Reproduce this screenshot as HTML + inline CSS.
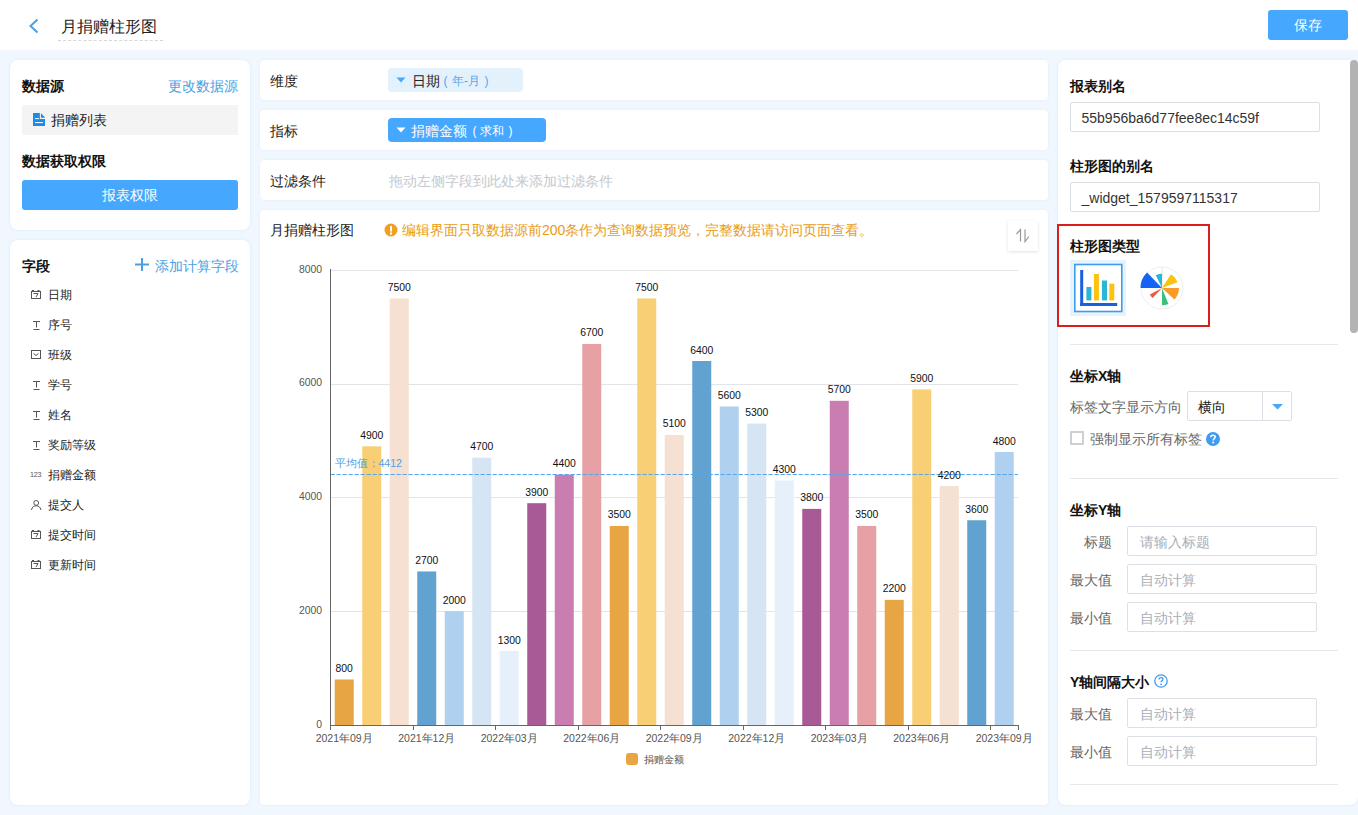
<!DOCTYPE html>
<html><head><meta charset="utf-8">
<style>
*{box-sizing:border-box;margin:0;padding:0}
html,body{width:1358px;height:815px;overflow:hidden;background:#f0f7fe;font-family:"Liberation Sans",sans-serif;position:relative}
.t{position:absolute;white-space:nowrap}
.hdr{position:absolute;left:0;top:0;width:1358px;height:50px;background:#fff}
.pn{position:absolute;background:#fff;border-radius:8px;box-shadow:0 0 3px rgba(120,170,220,0.18)}
.row{position:absolute;background:#fff;border-radius:4px;box-shadow:0 0 2px rgba(120,170,220,0.15)}
.btn{position:absolute;background:#45a8fe;border-radius:3px;color:#fff;text-align:center}
.inp{position:absolute;border:1px solid #dcdfe6;border-radius:2px;background:#fff}
.hr{position:absolute;height:1px;background:#e8e8e8}
.bl{position:absolute;width:40px;text-align:center;font-size:10.4px;line-height:20px;color:#111}
.yl{position:absolute;left:280px;width:42px;text-align:right;font-size:10.4px;line-height:20px;color:#555}
.xl{position:absolute;width:80px;text-align:center;font-size:10.5px;line-height:20px;color:#555}
.fi{position:absolute;left:30px;width:11px;height:12px;display:flex;align-items:center;justify-content:center}
</style></head><body>
<div class="hdr"></div>
<svg style="position:absolute;left:28px;top:18px" width="12" height="16" viewBox="0 0 12 16"><path d="M9.5 1.5 L2.5 8 L9.5 14.5" fill="none" stroke="#4a9fe8" stroke-width="2"/></svg>
<div class="t" style="left:61px;top:16.5px;font-size:16px;line-height:20px;color:#222;">月捐赠柱形图</div>

<div style="position:absolute;left:58px;top:40px;width:105px;border-top:1px dashed #d6d6d6"></div>
<div class="btn" style="left:1268px;top:10px;width:80px;height:30px;line-height:30px;font-size:14px">保存</div>

<!-- left panel 1 -->
<div class="pn" style="left:10px;top:60px;width:240px;height:170px"></div>
<div class="t" style="left:22px;top:75.5px;font-size:14px;line-height:20px;color:#111;font-weight:bold;">数据源</div>

<div class="t" style="left:168px;top:75.5px;font-size:14px;line-height:20px;color:#4a9fe0;">更改数据源</div>

<div style="position:absolute;left:22px;top:105px;width:216px;height:30px;background:#f4f4f4"></div>
<svg style="position:absolute;left:33px;top:113px" width="12" height="13" viewBox="0 0 12 13"><path d="M0 0 H7.8 L12 4.6 V13 H0 Z" fill="#1f8be8"/><path d="M7.4 0 V5.4 H12" fill="none" stroke="#e8f6ff" stroke-width="1.1"/><rect x="2" y="5" width="4" height="1.1" fill="#e8f6ff"/><rect x="2" y="9" width="8" height="1.1" fill="#e8f6ff"/></svg>
<div class="t" style="left:51px;top:110.0px;font-size:14px;line-height:20px;color:#222;">捐赠列表</div>

<div class="t" style="left:22px;top:151.0px;font-size:14px;line-height:20px;color:#111;font-weight:bold;">数据获取权限</div>

<div class="btn" style="left:22px;top:180px;width:216px;height:30px;line-height:30px;font-size:14px">报表权限</div>

<!-- left panel 2 -->
<div class="pn" style="left:10px;top:240px;width:240px;height:565px"></div>
<div class="t" style="left:22px;top:256.0px;font-size:14px;line-height:20px;color:#111;font-weight:bold;">字段</div>

<svg style="position:absolute;left:135px;top:258px" width="14" height="13" viewBox="0 0 14 13"><path d="M0 6.5 H14 M7 0 V13" stroke="#4a9fe0" stroke-width="2"/></svg>
<div class="t" style="left:155px;top:255.5px;font-size:14px;line-height:20px;color:#4a9fe0;">添加计算字段</div>

<svg style="position:absolute;left:31px;top:290px" width="10" height="9" viewBox="0 0 10 9"><path d="M1 0.5 H3 M6.5 0.5 H8.5" stroke="#555" stroke-width="1"/><rect x="0.5" y="1.5" width="9" height="7" fill="none" stroke="#555" stroke-width="1"/><path d="M2.5 3.5 H7 L5 7" fill="none" stroke="#555" stroke-width="1"/></svg><div class="t" style="left:48px;top:285.0px;font-size:12px;line-height:20px;color:#222;">日期</div>
<svg style="position:absolute;left:33px;top:321px" width="7" height="9" viewBox="0 0 7 9"><path d="M0 0.5 H7 M3.5 0.5 V6.5 M0.5 8.5 H6.5" fill="none" stroke="#555" stroke-width="1"/></svg><div class="t" style="left:48px;top:315.0px;font-size:12px;line-height:20px;color:#222;">序号</div>
<svg style="position:absolute;left:31px;top:350px" width="10" height="9" viewBox="0 0 10 9"><rect x="0.5" y="0.5" width="9" height="8" fill="none" stroke="#555" stroke-width="1"/><path d="M2.5 3.5 L5 5.5 L7.5 3.5" fill="none" stroke="#555" stroke-width="1"/></svg><div class="t" style="left:48px;top:345.0px;font-size:12px;line-height:20px;color:#222;">班级</div>
<svg style="position:absolute;left:33px;top:381px" width="7" height="9" viewBox="0 0 7 9"><path d="M0 0.5 H7 M3.5 0.5 V6.5 M0.5 8.5 H6.5" fill="none" stroke="#555" stroke-width="1"/></svg><div class="t" style="left:48px;top:375.0px;font-size:12px;line-height:20px;color:#222;">学号</div>
<svg style="position:absolute;left:33px;top:411px" width="7" height="9" viewBox="0 0 7 9"><path d="M0 0.5 H7 M3.5 0.5 V6.5 M0.5 8.5 H6.5" fill="none" stroke="#555" stroke-width="1"/></svg><div class="t" style="left:48px;top:405.0px;font-size:12px;line-height:20px;color:#222;">姓名</div>
<svg style="position:absolute;left:33px;top:441px" width="7" height="9" viewBox="0 0 7 9"><path d="M0 0.5 H7 M3.5 0.5 V6.5 M0.5 8.5 H6.5" fill="none" stroke="#555" stroke-width="1"/></svg><div class="t" style="left:48px;top:435.0px;font-size:12px;line-height:20px;color:#222;">奖励等级</div>
<svg style="position:absolute;left:30px;top:471px" width="13" height="7" viewBox="0 0 13 7"><text x="0" y="6" font-family="Liberation Sans" font-size="7.2" fill="#555" letter-spacing="-0.2">123</text></svg><div class="t" style="left:48px;top:465.0px;font-size:12px;line-height:20px;color:#222;">捐赠金额</div>
<svg style="position:absolute;left:31px;top:500px" width="11" height="10" viewBox="0 0 11 10"><circle cx="5.2" cy="2.9" r="2.4" fill="none" stroke="#555" stroke-width="1"/><path d="M0.5 10 C1 6.8 3 5.8 5.2 5.8 C7.4 5.8 9.4 6.8 9.9 10" fill="none" stroke="#555" stroke-width="1"/></svg><div class="t" style="left:48px;top:495.0px;font-size:12px;line-height:20px;color:#222;">提交人</div>
<svg style="position:absolute;left:31px;top:530px" width="10" height="9" viewBox="0 0 10 9"><path d="M1 0.5 H3 M6.5 0.5 H8.5" stroke="#555" stroke-width="1"/><rect x="0.5" y="1.5" width="9" height="7" fill="none" stroke="#555" stroke-width="1"/><path d="M2.5 3.5 H7 L5 7" fill="none" stroke="#555" stroke-width="1"/></svg><div class="t" style="left:48px;top:525.0px;font-size:12px;line-height:20px;color:#222;">提交时间</div>
<svg style="position:absolute;left:31px;top:560px" width="10" height="9" viewBox="0 0 10 9"><path d="M1 0.5 H3 M6.5 0.5 H8.5" stroke="#555" stroke-width="1"/><rect x="0.5" y="1.5" width="9" height="7" fill="none" stroke="#555" stroke-width="1"/><path d="M2.5 3.5 H7 L5 7" fill="none" stroke="#555" stroke-width="1"/></svg><div class="t" style="left:48px;top:555.0px;font-size:12px;line-height:20px;color:#222;">更新时间</div>


<!-- middle rows -->
<div class="row" style="left:260px;top:60px;width:788px;height:40px"></div>
<div class="t" style="left:270px;top:70.5px;font-size:14px;line-height:20px;color:#222;">维度</div>

<div style="position:absolute;left:388px;top:68px;width:135px;height:24px;background:#e3f1fd;border-radius:4px"></div>
<svg style="position:absolute;left:396px;top:77px" width="10" height="6" viewBox="0 0 10 6"><path d="M0.5 0.5 H9.5 L5 5.5 Z" fill="#45a8fe"/></svg>
<div class="t" style="left:412px;top:70.5px;font-size:14px;line-height:20px;color:#222;">日期</div>

<div class="t" style="left:443.5px;top:70.5px;font-size:12px;line-height:20px;color:#5aa5e6;">(</div>
<div class="t" style="left:452px;top:70.5px;font-size:12px;line-height:20px;color:#5aa5e6;">年-月</div>
<div class="t" style="left:484.5px;top:70.5px;font-size:12px;line-height:20px;color:#5aa5e6;">)</div>


<div class="row" style="left:260px;top:110px;width:788px;height:40px"></div>
<div class="t" style="left:270px;top:120.5px;font-size:14px;line-height:20px;color:#222;">指标</div>

<div style="position:absolute;left:388px;top:118px;width:158px;height:24px;background:#45a8fe;border-radius:4px"></div>
<svg style="position:absolute;left:396px;top:127px" width="10" height="6" viewBox="0 0 10 6"><path d="M0.5 0.5 H9.5 L5 5.5 Z" fill="#fff"/></svg>
<div class="t" style="left:411px;top:120.5px;font-size:14px;line-height:20px;color:#fff;">捐赠金额</div>

<div class="t" style="left:472.5px;top:120.5px;font-size:12px;line-height:20px;color:#fff;">(</div>
<div class="t" style="left:479.5px;top:120.5px;font-size:12px;line-height:20px;color:#fff;">求和</div>
<div class="t" style="left:508.5px;top:120.5px;font-size:12px;line-height:20px;color:#fff;">)</div>


<div class="row" style="left:260px;top:160px;width:788px;height:40px"></div>
<div class="t" style="left:270px;top:170.5px;font-size:14px;line-height:20px;color:#222;">过滤条件</div>

<div class="t" style="left:389px;top:170.5px;font-size:14px;line-height:20px;color:#c5c8ce;">拖动左侧字段到此处来添加过滤条件</div>


<!-- chart panel -->
<div class="row" style="left:260px;top:210px;width:788px;height:595px"></div>
<div class="t" style="left:270px;top:220.2px;font-size:14px;line-height:20px;color:#222;">月捐赠柱形图</div>

<svg style="position:absolute;left:384px;top:223px" width="14" height="14" viewBox="0 0 14 14"><circle cx="7" cy="7" r="6.5" fill="#f0a020"/><rect x="6" y="3" width="2" height="5.5" fill="#fff"/><rect x="6" y="9.5" width="2" height="2" fill="#fff"/></svg>
<div class="t" style="left:402px;top:220.2px;font-size:14px;line-height:20px;color:#e99c14;">编辑界面只取数据源前200条作为查询数据预览，完整数据请访问页面查看。</div>

<div style="position:absolute;left:1008px;top:221px;width:30px;height:30px;background:#fff;box-shadow:0 1px 3px rgba(0,0,0,0.12)"></div>
<svg style="position:absolute;left:1014px;top:227px" width="18" height="18" viewBox="0 0 18 18"><path d="M2.5 7 L6.5 2.5 V14.5 M11 2.5 V14.5 L15 9.5" fill="none" stroke="#999" stroke-width="1.2"/></svg>

<svg style="position:absolute;left:0;top:0" width="1358" height="815">
<line x1="330.5" y1="611.5" x2="1018.0" y2="611.5" stroke="#e2e4ea" stroke-width="1"/>
<line x1="330.5" y1="497.5" x2="1018.0" y2="497.5" stroke="#e2e4ea" stroke-width="1"/>
<line x1="330.5" y1="384.5" x2="1018.0" y2="384.5" stroke="#e2e4ea" stroke-width="1"/>
<line x1="330.5" y1="270.5" x2="1018.0" y2="270.5" stroke="#e2e4ea" stroke-width="1"/>
<rect x="334.75" y="679.50" width="19" height="45.50" fill="#e8a544"/>
<rect x="362.25" y="446.31" width="19" height="278.69" fill="#f9cf76"/>
<rect x="389.75" y="298.44" width="19" height="426.56" fill="#f5e0d1"/>
<rect x="417.25" y="571.44" width="19" height="153.56" fill="#62a2d0"/>
<rect x="444.75" y="611.25" width="19" height="113.75" fill="#afd0ee"/>
<rect x="472.25" y="457.69" width="19" height="267.31" fill="#d6e5f4"/>
<rect x="499.75" y="651.06" width="19" height="73.94" fill="#e6f0fa"/>
<rect x="527.25" y="503.19" width="19" height="221.81" fill="#a85a97"/>
<rect x="554.75" y="474.75" width="19" height="250.25" fill="#c97db0"/>
<rect x="582.25" y="343.94" width="19" height="381.06" fill="#e7a1a4"/>
<rect x="609.75" y="525.94" width="19" height="199.06" fill="#e8a544"/>
<rect x="637.25" y="298.44" width="19" height="426.56" fill="#f9cf76"/>
<rect x="664.75" y="434.94" width="19" height="290.06" fill="#f5e0d1"/>
<rect x="692.25" y="361.00" width="19" height="364.00" fill="#62a2d0"/>
<rect x="719.75" y="406.50" width="19" height="318.50" fill="#afd0ee"/>
<rect x="747.25" y="423.56" width="19" height="301.44" fill="#d6e5f4"/>
<rect x="774.75" y="480.44" width="19" height="244.56" fill="#e6f0fa"/>
<rect x="802.25" y="508.88" width="19" height="216.12" fill="#a85a97"/>
<rect x="829.75" y="400.81" width="19" height="324.19" fill="#c97db0"/>
<rect x="857.25" y="525.94" width="19" height="199.06" fill="#e7a1a4"/>
<rect x="884.75" y="599.88" width="19" height="125.12" fill="#e8a544"/>
<rect x="912.25" y="389.44" width="19" height="335.56" fill="#f9cf76"/>
<rect x="939.75" y="486.12" width="19" height="238.88" fill="#f5e0d1"/>
<rect x="967.25" y="520.25" width="19" height="204.75" fill="#62a2d0"/>
<rect x="994.75" y="452.00" width="19" height="273.00" fill="#afd0ee"/>
<line x1="330.5" y1="474.5" x2="1018.0" y2="474.5" stroke="#5aa5e6" stroke-width="1" stroke-dasharray="4.3,1.7"/>
<line x1="330.5" y1="269.0" x2="330.5" y2="725.5" stroke="#666" stroke-width="1"/>
<line x1="330.5" y1="725.5" x2="1018.5" y2="725.5" stroke="#666" stroke-width="1"/>
<line x1="330.5" y1="725.0" x2="330.5" y2="730.0" stroke="#666" stroke-width="1"/>
<line x1="413.5" y1="725.0" x2="413.5" y2="730.0" stroke="#666" stroke-width="1"/>
<line x1="495.5" y1="725.0" x2="495.5" y2="730.0" stroke="#666" stroke-width="1"/>
<line x1="578.5" y1="725.0" x2="578.5" y2="730.0" stroke="#666" stroke-width="1"/>
<line x1="660.5" y1="725.0" x2="660.5" y2="730.0" stroke="#666" stroke-width="1"/>
<line x1="743.5" y1="725.0" x2="743.5" y2="730.0" stroke="#666" stroke-width="1"/>
<line x1="825.5" y1="725.0" x2="825.5" y2="730.0" stroke="#666" stroke-width="1"/>
<line x1="908.5" y1="725.0" x2="908.5" y2="730.0" stroke="#666" stroke-width="1"/>
<line x1="990.5" y1="725.0" x2="990.5" y2="730.0" stroke="#666" stroke-width="1"/>
<line x1="1018.5" y1="725.0" x2="1018.5" y2="730.0" stroke="#666" stroke-width="1"/>
</svg>
<div class="bl" style="left:324.2px;top:659.0px">800</div>
<div class="bl" style="left:351.8px;top:425.8px">4900</div>
<div class="bl" style="left:379.2px;top:277.9px">7500</div>
<div class="bl" style="left:406.8px;top:550.9px">2700</div>
<div class="bl" style="left:434.2px;top:590.8px">2000</div>
<div class="bl" style="left:461.8px;top:437.2px">4700</div>
<div class="bl" style="left:489.2px;top:630.6px">1300</div>
<div class="bl" style="left:516.8px;top:482.7px">3900</div>
<div class="bl" style="left:544.2px;top:454.2px">4400</div>
<div class="bl" style="left:571.8px;top:323.4px">6700</div>
<div class="bl" style="left:599.2px;top:505.4px">3500</div>
<div class="bl" style="left:626.8px;top:277.9px">7500</div>
<div class="bl" style="left:654.2px;top:414.4px">5100</div>
<div class="bl" style="left:681.8px;top:340.5px">6400</div>
<div class="bl" style="left:709.2px;top:386.0px">5600</div>
<div class="bl" style="left:736.8px;top:403.1px">5300</div>
<div class="bl" style="left:764.2px;top:459.9px">4300</div>
<div class="bl" style="left:791.8px;top:488.4px">3800</div>
<div class="bl" style="left:819.2px;top:380.3px">5700</div>
<div class="bl" style="left:846.8px;top:505.4px">3500</div>
<div class="bl" style="left:874.2px;top:579.4px">2200</div>
<div class="bl" style="left:901.8px;top:368.9px">5900</div>
<div class="bl" style="left:929.2px;top:465.6px">4200</div>
<div class="bl" style="left:956.8px;top:499.8px">3600</div>
<div class="bl" style="left:984.2px;top:431.5px">4800</div>
<div class="yl" style="top:714.5px">0</div>
<div class="yl" style="top:600.8px">2000</div>
<div class="yl" style="top:487.0px">4000</div>
<div class="yl" style="top:373.2px">6000</div>
<div class="yl" style="top:259.5px">8000</div>
<div class="xl" style="left:304.2px;top:728.0px">2021年09月</div>
<div class="xl" style="left:386.8px;top:728.0px">2021年12月</div>
<div class="xl" style="left:469.2px;top:728.0px">2022年03月</div>
<div class="xl" style="left:551.8px;top:728.0px">2022年06月</div>
<div class="xl" style="left:634.2px;top:728.0px">2022年09月</div>
<div class="xl" style="left:716.8px;top:728.0px">2022年12月</div>
<div class="xl" style="left:799.2px;top:728.0px">2023年03月</div>
<div class="xl" style="left:881.8px;top:728.0px">2023年06月</div>
<div class="xl" style="left:964.2px;top:728.0px">2023年09月</div>
<div class="t" style="left:334.5px;top:453.0px;font-size:10.5px;line-height:20px;color:#4f9fe3;">平均值：4412</div>

<div style="position:absolute;left:626px;top:753px;width:11.5px;height:11.5px;background:#e8a544;border-radius:3px"></div>
<div class="t" style="left:643.5px;top:749.5px;font-size:10px;line-height:20px;color:#555;">捐赠金额</div>


<!-- right panel -->
<div class="pn" style="left:1058px;top:60px;width:300px;height:745px"></div>
<div class="t" style="left:1070px;top:75.5px;font-size:14px;line-height:20px;color:#111;font-weight:bold;">报表别名</div>

<div class="inp" style="left:1070px;top:102px;width:250px;height:30px"></div>
<div class="t" style="left:1081.5px;top:107.5px;font-size:14px;line-height:20px;color:#333;">55b956ba6d77fee8ec14c59f</div>

<div class="t" style="left:1070px;top:156.0px;font-size:14px;line-height:20px;color:#111;font-weight:bold;">柱形图的别名</div>

<div class="inp" style="left:1070px;top:182px;width:250px;height:30px"></div>
<div class="t" style="left:1081.5px;top:187.5px;font-size:14px;line-height:20px;color:#333;">_widget_1579597115317</div>

<div style="position:absolute;left:1057px;top:224px;width:153px;height:103px;border:2px solid #dc1d1d"></div>
<div class="t" style="left:1070px;top:235.5px;font-size:14px;line-height:20px;color:#111;font-weight:bold;">柱形图类型</div>

<div style="position:absolute;left:1070px;top:260px;width:56px;height:56px;background:#e6f3f9"></div>
<svg style="position:absolute;left:1070px;top:260px" width="56" height="56" viewBox="0 0 56 56">
<rect x="4.8" y="4.5" width="47" height="47" fill="#fff" stroke="#3c9cf0" stroke-width="1.6"/>
<rect x="10.2" y="10" width="3" height="36" fill="#1a5fe0"/>
<rect x="10.2" y="43" width="37" height="3" fill="#1a5fe0"/>
<rect x="16.4" y="27" width="5" height="13.4" fill="#2ab7d6"/>
<rect x="23.9" y="14" width="5" height="26.4" fill="#fcc20f"/>
<rect x="32" y="20.5" width="5" height="19.9" fill="#2ab7d6"/>
<rect x="39.3" y="23.7" width="5" height="16.7" fill="#fcc20f"/>
</svg>
<svg style="position:absolute;left:1138px;top:264px" width="48" height="48" viewBox="-24 -24 48 48">
<circle cx="0" cy="0" r="21" fill="#fff" stroke="#eeeeee" stroke-width="1"/>
<line x1="0" y1="0" x2="0" y2="-21" stroke="#e6e6e6" stroke-width="1"/>
<path d="M0 0 L-21.50 -0.00 A21.5 21.5 0 0 1 -14.94 -15.47 Z" fill="#1463f5"/>
<path d="M0 0 L-6.22 -12.76 A14.2 14.2 0 0 1 0.00 -14.20 Z" fill="#2ab7d6"/>
<path d="M0 0 L8.99 -13.84 A16.5 16.5 0 0 1 15.50 -5.64 Z" fill="#fcc20f"/>
<path d="M0 0 L17.00 -0.00 A17 17 0 0 1 12.43 11.59 Z" fill="#fb9a26"/>
<path d="M0 0 L6.44 15.95 A17.2 17.2 0 0 1 0.00 17.20 Z" fill="#3cbf7a"/>
<path d="M0 0 L-9.34 10.02 A13.7 13.7 0 0 1 -12.10 6.43 Z" fill="#ee5a3a"/>
</svg>
<div class="hr" style="left:1070px;top:344px;width:268px"></div>
<div class="t" style="left:1070px;top:366.3px;font-size:14px;line-height:20px;color:#111;font-weight:bold;">坐标X轴</div>

<div class="t" style="left:1070px;top:396.5px;font-size:14px;line-height:20px;color:#666;">标签文字显示方向</div>

<div class="inp" style="left:1187px;top:391px;width:105px;height:30px"></div>
<div style="position:absolute;left:1262px;top:392px;width:1px;height:28px;background:#dcdfe6"></div>
<svg style="position:absolute;left:1272px;top:404px" width="11" height="6" viewBox="0 0 11 6"><path d="M0 0 H11 L5.5 5.5 Z" fill="#45a8fe"/></svg>
<div class="t" style="left:1198px;top:396.5px;font-size:14px;line-height:20px;color:#222;">横向</div>

<div style="position:absolute;left:1070px;top:431px;width:14px;height:14px;border:2px solid #cfcfcf;border-radius:1px;background:#fff"></div>
<div class="t" style="left:1089.5px;top:428.5px;font-size:14px;line-height:20px;color:#666;">强制显示所有标签</div>

<svg style="position:absolute;left:1206px;top:432px" width="14" height="14" viewBox="0 0 14 14"><circle cx="7" cy="7" r="7" fill="#3f9cf0"/><path d="M4.8 5.3 C4.8 3.8 5.8 3.2 7 3.2 C8.3 3.2 9.2 4 9.2 5.1 C9.2 6.6 7.2 6.6 7.2 8.4" fill="none" stroke="#fff" stroke-width="1.6"/><circle cx="7.2" cy="10.6" r="1" fill="#fff"/></svg>

<div class="hr" style="left:1070px;top:478px;width:268px"></div>
<div class="t" style="left:1070px;top:500.2px;font-size:14px;line-height:20px;color:#111;font-weight:bold;">坐标Y轴</div>

<div class="t" style="left:1084px;top:531.5px;font-size:14px;line-height:20px;color:#666;">标题</div>

<div class="inp" style="left:1127px;top:526px;width:190px;height:30px"></div>
<div class="t" style="left:1139.5px;top:531.5px;font-size:14px;line-height:20px;color:#a9aeb6;">请输入标题</div>

<div class="t" style="left:1070px;top:569.5px;font-size:14px;line-height:20px;color:#666;">最大值</div>

<div class="inp" style="left:1127px;top:564px;width:190px;height:30px"></div>
<div class="t" style="left:1139.5px;top:569.5px;font-size:14px;line-height:20px;color:#a9aeb6;">自动计算</div>

<div class="t" style="left:1070px;top:607.5px;font-size:14px;line-height:20px;color:#666;">最小值</div>

<div class="inp" style="left:1127px;top:602px;width:190px;height:30px"></div>
<div class="t" style="left:1139.5px;top:607.5px;font-size:14px;line-height:20px;color:#a9aeb6;">自动计算</div>


<div class="hr" style="left:1070px;top:650px;width:268px"></div>
<div class="t" style="left:1070px;top:671.5px;font-size:14px;line-height:20px;color:#111;font-weight:bold;">Y轴间隔大小</div>

<svg style="position:absolute;left:1154px;top:674px" width="14" height="14" viewBox="0 0 14 14"><circle cx="7" cy="7" r="6.2" fill="none" stroke="#3f9cf0" stroke-width="1.3"/><path d="M5 5.5 C5 4.2 5.9 3.6 7 3.6 C8.1 3.6 9 4.3 9 5.3 C9 6.6 7.1 6.7 7.1 8.3" fill="none" stroke="#3f9cf0" stroke-width="1.3"/><circle cx="7.1" cy="10.3" r="0.9" fill="#3f9cf0"/></svg>
<div class="t" style="left:1070px;top:703.5px;font-size:14px;line-height:20px;color:#666;">最大值</div>

<div class="inp" style="left:1127px;top:698px;width:190px;height:30px"></div>
<div class="t" style="left:1139.5px;top:703.5px;font-size:14px;line-height:20px;color:#a9aeb6;">自动计算</div>

<div class="t" style="left:1070px;top:741.5px;font-size:14px;line-height:20px;color:#666;">最小值</div>

<div class="inp" style="left:1127px;top:736px;width:190px;height:30px"></div>
<div class="t" style="left:1139.5px;top:741.5px;font-size:14px;line-height:20px;color:#a9aeb6;">自动计算</div>

<div class="hr" style="left:1070px;top:784px;width:268px"></div>
<div style="position:absolute;left:1350px;top:60px;width:8px;height:273px;background:#b3b3b3;border-radius:4px"></div>
</body></html>
